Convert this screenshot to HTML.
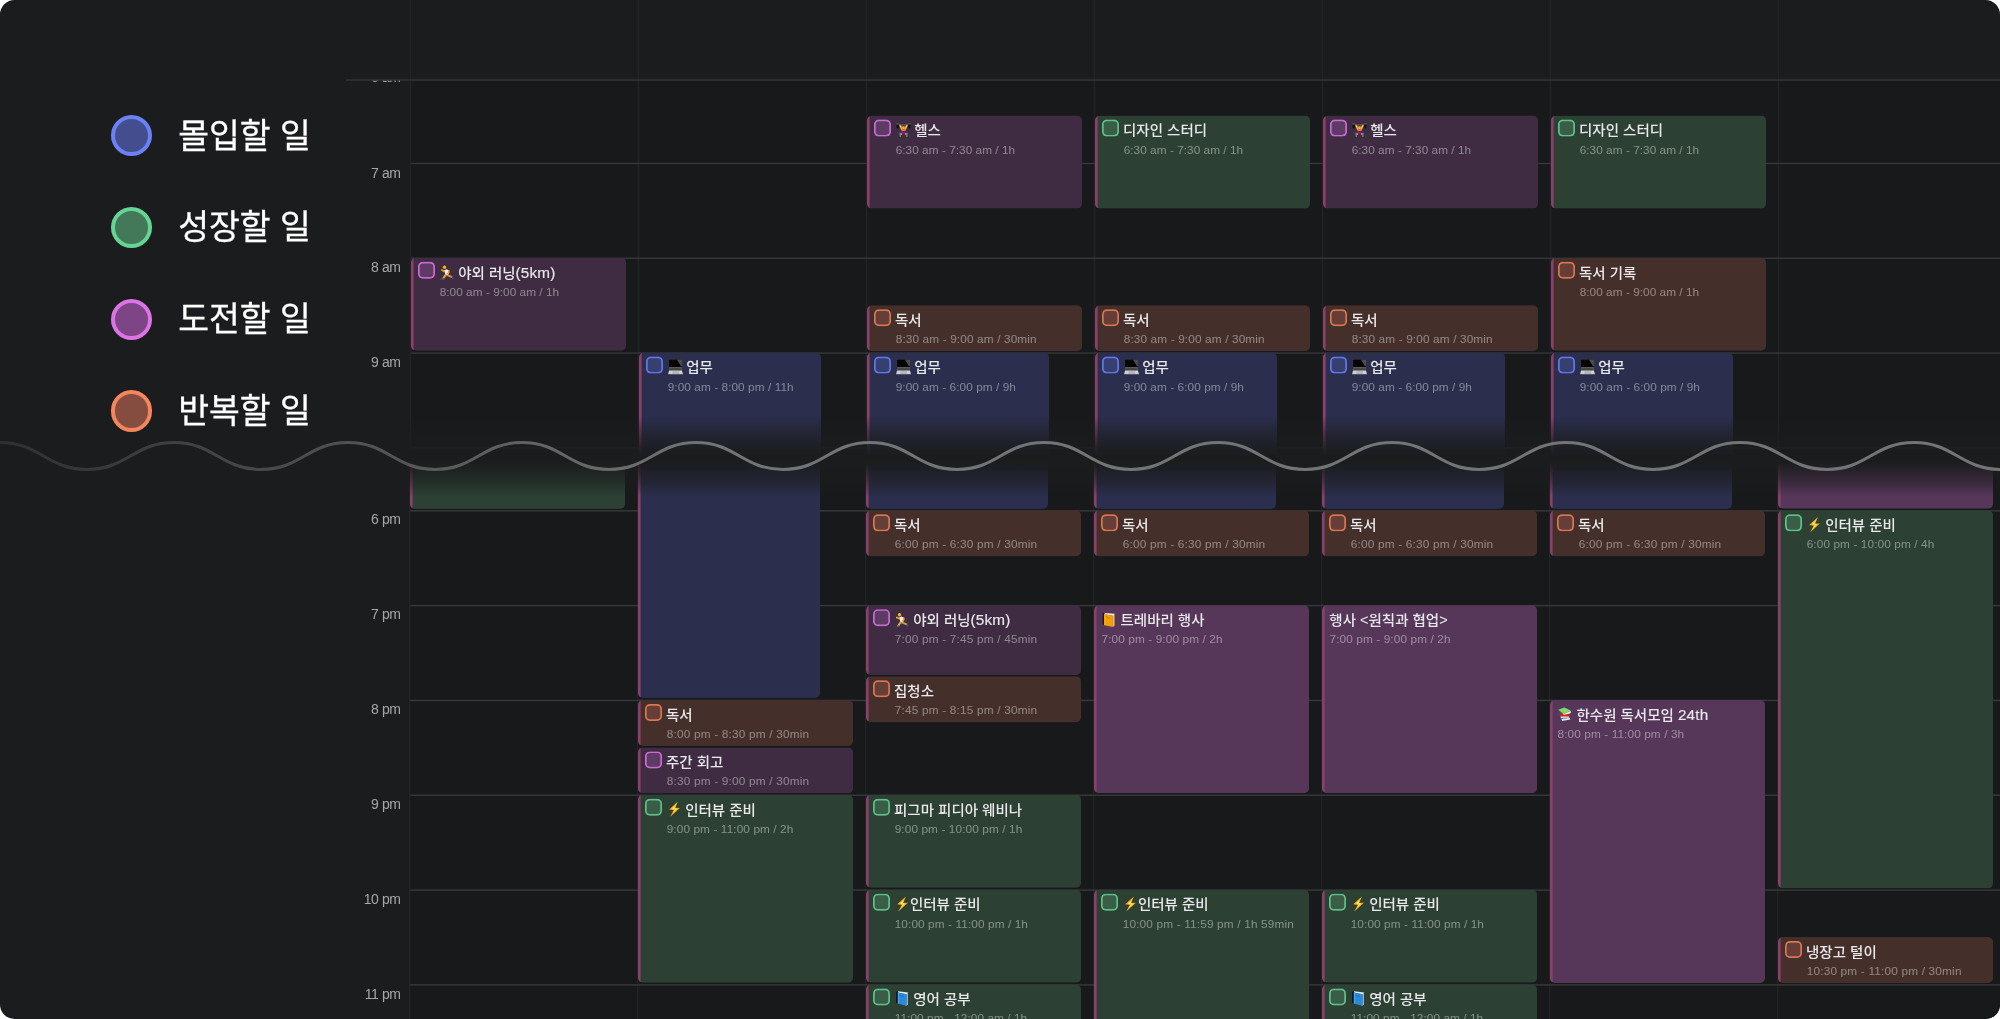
<!DOCTYPE html>
<html lang="ko">
<head>
<meta charset="utf-8">
<title>Calendar</title>
<style>
html,body{margin:0;padding:0;background:#fff}
body{width:2000px;height:1019px;overflow:hidden;font-family:"Liberation Sans","Noto Sans CJK KR",sans-serif}
#frame{will-change:transform;position:relative;width:2000px;height:1019px;background:#1b1c1e;border-radius:14.5px;overflow:hidden}
.sec{position:absolute;left:0;width:2000px;overflow:hidden}
.grid{position:absolute;background:#18191b}
.ln{position:absolute;left:0;top:0}
.tl{position:absolute;left:340.6px;width:60px;text-align:right;font-size:14px;letter-spacing:-.4px;line-height:16px;color:#a6a7a8;white-space:nowrap}
.ev{position:absolute;box-sizing:border-box;background-image:linear-gradient(90deg,#8c3f6b 0,#8c3f6b 2.1px,rgba(140,63,107,0) 3.1px);border-radius:5px;overflow:hidden;white-space:nowrap}
.cb{position:absolute;left:7px;top:4.1px;width:17px;height:17px;box-sizing:border-box;border-radius:5px}
.tt{position:absolute;left:28px;top:5.1px;height:20px;line-height:20px;font-size:14.5px;font-weight:500;color:#e9e9eb;transform-origin:0 50%;transform:scaleY(.95)}
.tt.nc{left:7.3px}
.st{position:absolute;left:28.7px;top:26.5px;height:14px;line-height:14px;font-size:11.8px;color:rgba(255,255,255,.42)}
.st.nc{left:7.5px}
.em{display:inline-block;width:15px;height:16.84px;vertical-align:top;margin-top:.5px;margin-left:.9px}
.la{font-size:15.3px;letter-spacing:.15px;-webkit-text-stroke:.15px #e9e9eb}
.sp{display:inline-block;width:3.3px}
.nc .em{margin-left:.1px}
.nc .sp{width:4.1px}
.fade{position:absolute;left:0;top:400px;width:2000px;height:110px;background:linear-gradient(to bottom,rgba(27,28,30,0) 16px,rgba(27,28,30,.5) 33px,rgba(27,28,30,.86) 48px,rgba(27,28,30,1) 56px,rgba(27,28,30,1) 62px,rgba(27,28,30,.86) 68px,rgba(27,28,30,.5) 82px,rgba(27,28,30,0) 97px)}
.wave{position:absolute;left:0;top:425px}
.dot{position:absolute;left:110.9px;width:41.6px;height:41.6px;box-sizing:border-box;border:4px solid;border-radius:50%}
.lg{position:absolute;left:178.2px;height:60px;line-height:60px;font-size:33.5px;font-weight:400;-webkit-text-stroke:.3px #fff;color:#fff;white-space:nowrap;transform-origin:0 50%;transform:translateY(.6px) scale(1,1.025)}
</style>
</head>
<body>
<div id="frame">
<div class="sec" style="top:0;height:456px">
<div class="grid" style="left:411px;top:80px;width:1589px;height:400px"></div>
<svg class="ln" width="2000" height="480" viewBox="0 0 2000 480"><rect x="409.80" y="0.00" width="1.40" height="480.00" fill="#222325"/><rect x="637.80" y="0.00" width="1.40" height="480.00" fill="#222325"/><rect x="865.80" y="0.00" width="1.40" height="480.00" fill="#222325"/><rect x="1093.80" y="0.00" width="1.40" height="480.00" fill="#222325"/><rect x="1321.80" y="0.00" width="1.40" height="480.00" fill="#222325"/><rect x="1549.80" y="0.00" width="1.40" height="480.00" fill="#222325"/><rect x="1777.80" y="0.00" width="1.40" height="480.00" fill="#222325"/><rect x="2005.80" y="0.00" width="1.40" height="480.00" fill="#222325"/><rect x="346.00" y="79.25" width="1654.00" height="1.60" fill="#313334"/><rect x="411.20" y="162.75" width="1589.00" height="1.40" fill="#363738"/><rect x="411.20" y="257.55" width="1589.00" height="1.40" fill="#363738"/><rect x="411.20" y="352.35" width="1589.00" height="1.40" fill="#363738"/><rect x="411.20" y="447.15" width="1589.00" height="1.40" fill="#363738"/></svg>
<div class="tl" style="top:69.4px;clip-path:inset(11.4px 0 0 0)">6 am</div>
<div class="tl" style="top:164.5px">7 am</div>
<div class="tl" style="top:259.4px">8 am</div>
<div class="tl" style="top:354.1px">9 am</div>
<div class="ev" style="left:411px;top:257px;width:215px;height:93px;background-color:#3f2c42;transform:translateY(0.80px)"><i class="cb" style="background:#5e3b64;box-shadow:inset 0 0 0 1.7px #c96bd3"></i><div class="tt"><svg class="em" viewBox="0 0 15 16" preserveAspectRatio="none"><path d="M5.6 10.6 L3.2 14.3" stroke="#f0a51b" stroke-width="2" stroke-linecap="round"/><path d="M8 11.2 L11.6 12.7" stroke="#e99a17" stroke-width="1.9" stroke-linecap="round"/><path d="M.5 15.3 L3.7 14.7" stroke="#2f4f95" stroke-width="1.5" stroke-linecap="round"/><path d="M12.3 12.4 L12.9 14.7" stroke="#2f4f95" stroke-width="1.5" stroke-linecap="round"/><path d="M5.4 10 L8.7 10.5 L8.2 12.1 L6 11.8Z" fill="#81878e"/><path d="M4 5.9 L6.6 4.9 L8.7 5.9 L8.7 9.2 L7.8 11 L5.4 10.1Z" fill="#eef0f5"/><path d="M4 7 L1.8 5.8" stroke="#f0a51b" stroke-width="1.7" stroke-linecap="round"/><path d="M8.8 6.4 L8.8 8.2 L7.3 9.3" stroke="#f0a51b" stroke-width="1.6" stroke-linecap="round" stroke-linejoin="round" fill="none"/><ellipse cx="4.5" cy="3.1" rx="1.65" ry="1.75" fill="#f6b41c"/></svg><b class="sp"></b>야외 러닝<span class="la">(5km)</span></div><div class="st" style="letter-spacing:0.036px">8:00 am - 9:00 am / 1h</div></div>
<div class="ev" style="left:639px;top:352px;width:182px;height:1041px;background-color:#2b2e4c;transform:translateY(0.60px)"><i class="cb" style="background:#373f70;box-shadow:inset 0 0 0 1.7px #6079ea"></i><div class="tt"><svg class="em" viewBox="0 0 15 16" preserveAspectRatio="none"><path d="M1.1 .1 H14 V7.9 H1.1Z" fill="#050506"/><path d="M8.8 .5 H14 V7.2 H13Z" fill="#4b4c4d"/><path d="M1.1 .1 H14 V.7 H1.1Z" fill="#3b3c40"/><path d="M1.2 7.9 H13.9 V11.3 H1.2Z" fill="#59595a"/><path d="M1.8 9.2 H13.2 V10.9 H1.8Z" fill="#434344"/><path d="M1 11.5 H14 L15.1 15.6 H0Z" fill="#d0d0d2"/><path d="M4.6 12.3 H10.9 L11.2 15.1 H4.3Z" fill="#b4b4b6"/></svg><b class="sp"></b>업무</div><div class="st" style="letter-spacing:0.070px">9:00 am - 8:00 pm / 11h</div></div>
<div class="ev" style="left:867px;top:115px;width:215px;height:93px;background-color:#3f2c42;transform:translateY(0.60px)"><i class="cb" style="background:#5e3b64;box-shadow:inset 0 0 0 1.7px #c96bd3"></i><div class="tt"><svg class="em" viewBox="0 0 15 16" preserveAspectRatio="none"><path d="M2.6 2.9 H12.5" stroke="#8f8f98" stroke-width=".6"/><rect x=".6" y="1.3" width="2.1" height="5.2" rx="1" fill="#0b0b0c"/><rect x="12.4" y="1.3" width="2.1" height="5.2" rx="1" fill="#0b0b0c"/><path d="M.9 1.9 h1.5 M12.7 1.9 h1.5" stroke="#8d9092" stroke-width=".9" stroke-linecap="round"/><path d="M4.2 3.5 L6.1 7.9 M10.8 3.5 L8.9 7.9" stroke="#f2ae1d" stroke-width="1.7" stroke-linecap="round"/><path d="M4.3 4.6 l.9 -.2 M10.7 4.6 l-.9 -.2" stroke="#dcdde2" stroke-width="1.2"/><circle cx="7.5" cy="5.7" r="1.5" fill="#f5b31c"/><path d="M5.8 7.6 H9.3 L9 10 L10 12.4 H8.2 L7.5 11.4 L6.8 12.4 H5 L6.1 10Z" fill="#a9156c"/><path d="M5.9 7.5 H9.2 L9.1 8.6 H6Z" fill="#f0876a"/><path d="M6.6 9 H8.5 V11.8 H6.6Z" fill="#8e0f75"/><circle cx="4.1" cy="11.9" r="1.35" fill="#1a6cc2"/><circle cx="11" cy="11.9" r="1.35" fill="#1a6cc2"/><path d="M5.4 10.9 V12.9 M9.7 10.9 V12.9" stroke="#e8951c" stroke-width="1"/><path d="M4.8 10.9 V12.9 M10.3 10.9 V12.9" stroke="#7cc23c" stroke-width=".5"/><path d="M4.3 13.4 V14.6 M10.8 13.4 V14.6" stroke="#f2ae1d" stroke-width="1.5"/><path d="M3.5 15.4 H5.2 M9.9 15.4 H11.6" stroke="#1b2432" stroke-width="1.3" stroke-linecap="round"/></svg><b class="sp"></b>헬스</div><div class="st" style="letter-spacing:0.036px">6:30 am - 7:30 am / 1h</div></div>
<div class="ev" style="left:867px;top:305px;width:215px;height:46px;background-color:#452f2b;transform:translateY(0.20px)"><i class="cb" style="background:#653f37;box-shadow:inset 0 0 0 1.7px #da7650"></i><div class="tt">독서</div><div class="st" style="letter-spacing:0.136px">8:30 am - 9:00 am / 30min</div></div>
<div class="ev" style="left:867px;top:352px;width:182px;height:852px;background-color:#2b2e4c;transform:translateY(0.60px)"><i class="cb" style="background:#373f70;box-shadow:inset 0 0 0 1.7px #6079ea"></i><div class="tt"><svg class="em" viewBox="0 0 15 16" preserveAspectRatio="none"><path d="M1.1 .1 H14 V7.9 H1.1Z" fill="#050506"/><path d="M8.8 .5 H14 V7.2 H13Z" fill="#4b4c4d"/><path d="M1.1 .1 H14 V.7 H1.1Z" fill="#3b3c40"/><path d="M1.2 7.9 H13.9 V11.3 H1.2Z" fill="#59595a"/><path d="M1.8 9.2 H13.2 V10.9 H1.8Z" fill="#434344"/><path d="M1 11.5 H14 L15.1 15.6 H0Z" fill="#d0d0d2"/><path d="M4.6 12.3 H10.9 L11.2 15.1 H4.3Z" fill="#b4b4b6"/></svg><b class="sp"></b>업무</div><div class="st" style="letter-spacing:0.073px">9:00 am - 6:00 pm / 9h</div></div>
<div class="ev" style="left:1095px;top:115px;width:215px;height:93px;background-color:#2c4034;transform:translateY(0.60px)"><i class="cb" style="background:#395d47;box-shadow:inset 0 0 0 1.7px #5ec08a"></i><div class="tt">디자인 스터디</div><div class="st" style="letter-spacing:0.036px">6:30 am - 7:30 am / 1h</div></div>
<div class="ev" style="left:1095px;top:305px;width:215px;height:46px;background-color:#452f2b;transform:translateY(0.20px)"><i class="cb" style="background:#653f37;box-shadow:inset 0 0 0 1.7px #da7650"></i><div class="tt">독서</div><div class="st" style="letter-spacing:0.136px">8:30 am - 9:00 am / 30min</div></div>
<div class="ev" style="left:1095px;top:352px;width:182px;height:852px;background-color:#2b2e4c;transform:translateY(0.60px)"><i class="cb" style="background:#373f70;box-shadow:inset 0 0 0 1.7px #6079ea"></i><div class="tt"><svg class="em" viewBox="0 0 15 16" preserveAspectRatio="none"><path d="M1.1 .1 H14 V7.9 H1.1Z" fill="#050506"/><path d="M8.8 .5 H14 V7.2 H13Z" fill="#4b4c4d"/><path d="M1.1 .1 H14 V.7 H1.1Z" fill="#3b3c40"/><path d="M1.2 7.9 H13.9 V11.3 H1.2Z" fill="#59595a"/><path d="M1.8 9.2 H13.2 V10.9 H1.8Z" fill="#434344"/><path d="M1 11.5 H14 L15.1 15.6 H0Z" fill="#d0d0d2"/><path d="M4.6 12.3 H10.9 L11.2 15.1 H4.3Z" fill="#b4b4b6"/></svg><b class="sp"></b>업무</div><div class="st" style="letter-spacing:0.073px">9:00 am - 6:00 pm / 9h</div></div>
<div class="ev" style="left:1323px;top:115px;width:215px;height:93px;background-color:#3f2c42;transform:translateY(0.60px)"><i class="cb" style="background:#5e3b64;box-shadow:inset 0 0 0 1.7px #c96bd3"></i><div class="tt"><svg class="em" viewBox="0 0 15 16" preserveAspectRatio="none"><path d="M2.6 2.9 H12.5" stroke="#8f8f98" stroke-width=".6"/><rect x=".6" y="1.3" width="2.1" height="5.2" rx="1" fill="#0b0b0c"/><rect x="12.4" y="1.3" width="2.1" height="5.2" rx="1" fill="#0b0b0c"/><path d="M.9 1.9 h1.5 M12.7 1.9 h1.5" stroke="#8d9092" stroke-width=".9" stroke-linecap="round"/><path d="M4.2 3.5 L6.1 7.9 M10.8 3.5 L8.9 7.9" stroke="#f2ae1d" stroke-width="1.7" stroke-linecap="round"/><path d="M4.3 4.6 l.9 -.2 M10.7 4.6 l-.9 -.2" stroke="#dcdde2" stroke-width="1.2"/><circle cx="7.5" cy="5.7" r="1.5" fill="#f5b31c"/><path d="M5.8 7.6 H9.3 L9 10 L10 12.4 H8.2 L7.5 11.4 L6.8 12.4 H5 L6.1 10Z" fill="#a9156c"/><path d="M5.9 7.5 H9.2 L9.1 8.6 H6Z" fill="#f0876a"/><path d="M6.6 9 H8.5 V11.8 H6.6Z" fill="#8e0f75"/><circle cx="4.1" cy="11.9" r="1.35" fill="#1a6cc2"/><circle cx="11" cy="11.9" r="1.35" fill="#1a6cc2"/><path d="M5.4 10.9 V12.9 M9.7 10.9 V12.9" stroke="#e8951c" stroke-width="1"/><path d="M4.8 10.9 V12.9 M10.3 10.9 V12.9" stroke="#7cc23c" stroke-width=".5"/><path d="M4.3 13.4 V14.6 M10.8 13.4 V14.6" stroke="#f2ae1d" stroke-width="1.5"/><path d="M3.5 15.4 H5.2 M9.9 15.4 H11.6" stroke="#1b2432" stroke-width="1.3" stroke-linecap="round"/></svg><b class="sp"></b>헬스</div><div class="st" style="letter-spacing:0.036px">6:30 am - 7:30 am / 1h</div></div>
<div class="ev" style="left:1323px;top:305px;width:215px;height:46px;background-color:#452f2b;transform:translateY(0.20px)"><i class="cb" style="background:#653f37;box-shadow:inset 0 0 0 1.7px #da7650"></i><div class="tt">독서</div><div class="st" style="letter-spacing:0.136px">8:30 am - 9:00 am / 30min</div></div>
<div class="ev" style="left:1323px;top:352px;width:182px;height:852px;background-color:#2b2e4c;transform:translateY(0.60px)"><i class="cb" style="background:#373f70;box-shadow:inset 0 0 0 1.7px #6079ea"></i><div class="tt"><svg class="em" viewBox="0 0 15 16" preserveAspectRatio="none"><path d="M1.1 .1 H14 V7.9 H1.1Z" fill="#050506"/><path d="M8.8 .5 H14 V7.2 H13Z" fill="#4b4c4d"/><path d="M1.1 .1 H14 V.7 H1.1Z" fill="#3b3c40"/><path d="M1.2 7.9 H13.9 V11.3 H1.2Z" fill="#59595a"/><path d="M1.8 9.2 H13.2 V10.9 H1.8Z" fill="#434344"/><path d="M1 11.5 H14 L15.1 15.6 H0Z" fill="#d0d0d2"/><path d="M4.6 12.3 H10.9 L11.2 15.1 H4.3Z" fill="#b4b4b6"/></svg><b class="sp"></b>업무</div><div class="st" style="letter-spacing:0.073px">9:00 am - 6:00 pm / 9h</div></div>
<div class="ev" style="left:1551px;top:115px;width:215px;height:93px;background-color:#2c4034;transform:translateY(0.60px)"><i class="cb" style="background:#395d47;box-shadow:inset 0 0 0 1.7px #5ec08a"></i><div class="tt">디자인 스터디</div><div class="st" style="letter-spacing:0.036px">6:30 am - 7:30 am / 1h</div></div>
<div class="ev" style="left:1551px;top:257px;width:215px;height:93px;background-color:#452f2b;transform:translateY(0.80px)"><i class="cb" style="background:#653f37;box-shadow:inset 0 0 0 1.7px #da7650"></i><div class="tt">독서 기록</div><div class="st" style="letter-spacing:0.036px">8:00 am - 9:00 am / 1h</div></div>
<div class="ev" style="left:1551px;top:352px;width:182px;height:852px;background-color:#2b2e4c;transform:translateY(0.60px)"><i class="cb" style="background:#373f70;box-shadow:inset 0 0 0 1.7px #6079ea"></i><div class="tt"><svg class="em" viewBox="0 0 15 16" preserveAspectRatio="none"><path d="M1.1 .1 H14 V7.9 H1.1Z" fill="#050506"/><path d="M8.8 .5 H14 V7.2 H13Z" fill="#4b4c4d"/><path d="M1.1 .1 H14 V.7 H1.1Z" fill="#3b3c40"/><path d="M1.2 7.9 H13.9 V11.3 H1.2Z" fill="#59595a"/><path d="M1.8 9.2 H13.2 V10.9 H1.8Z" fill="#434344"/><path d="M1 11.5 H14 L15.1 15.6 H0Z" fill="#d0d0d2"/><path d="M4.6 12.3 H10.9 L11.2 15.1 H4.3Z" fill="#b4b4b6"/></svg><b class="sp"></b>업무</div><div class="st" style="letter-spacing:0.073px">9:00 am - 6:00 pm / 9h</div></div>
</div>
<div class="sec" style="top:456px;height:563px"><div style="position:absolute;left:0;top:-456px;width:2000px;height:1019px">
<div class="grid" style="left:410px;top:440px;width:1590px;height:579px"></div>
<svg class="ln" width="2000" height="1019" viewBox="0 0 2000 1019"><rect x="408.90" y="440.00" width="1.40" height="579.00" fill="#222325"/><rect x="636.90" y="440.00" width="1.40" height="579.00" fill="#222325"/><rect x="864.90" y="440.00" width="1.40" height="579.00" fill="#222325"/><rect x="1092.90" y="440.00" width="1.40" height="579.00" fill="#222325"/><rect x="1320.90" y="440.00" width="1.40" height="579.00" fill="#222325"/><rect x="1548.90" y="440.00" width="1.40" height="579.00" fill="#222325"/><rect x="1776.90" y="440.00" width="1.40" height="579.00" fill="#222325"/><rect x="2004.90" y="440.00" width="1.40" height="579.00" fill="#222325"/><rect x="410.30" y="415.23" width="1590.00" height="1.50" fill="#363738"/><rect x="410.30" y="510.05" width="1590.00" height="1.50" fill="#363738"/><rect x="410.30" y="604.87" width="1590.00" height="1.50" fill="#363738"/><rect x="410.30" y="699.69" width="1590.00" height="1.50" fill="#363738"/><rect x="410.30" y="794.51" width="1590.00" height="1.50" fill="#363738"/><rect x="410.30" y="889.33" width="1590.00" height="1.50" fill="#363738"/><rect x="410.30" y="984.15" width="1590.00" height="1.50" fill="#363738"/></svg>
<div class="tl" style="top:511.4px">6 pm</div>
<div class="tl" style="top:606.2px">7 pm</div>
<div class="tl" style="top:701.0px">8 pm</div>
<div class="tl" style="top:795.9px">9 pm</div>
<div class="tl" style="top:890.7px">10 pm</div>
<div class="tl" style="top:985.5px">11 pm</div>
<div class="ev" style="left:410px;top:225px;width:215px;height:283px;background-color:#2c4034;transform:translateY(0.89px)"><i class="cb" style="background:#395d47;box-shadow:inset 0 0 0 1.7px #5ec08a"></i></div>
<div class="ev" style="left:638px;top:-344px;width:182px;height:1041px;background-color:#2b2e4c;transform:translateY(0.97px)"><i class="cb" style="background:#373f70;box-shadow:inset 0 0 0 1.7px #6079ea"></i></div>
<div class="ev" style="left:638px;top:699px;width:215px;height:46px;background-color:#452f2b;transform:translateY(0.99px)"><i class="cb" style="background:#653f37;box-shadow:inset 0 0 0 1.7px #da7650"></i><div class="tt">독서</div><div class="st" style="letter-spacing:0.200px">8:00 pm - 8:30 pm / 30min</div></div>
<div class="ev" style="left:638px;top:747px;width:215px;height:46px;background-color:#3f2c42;transform:translateY(0.40px)"><i class="cb" style="background:#5e3b64;box-shadow:inset 0 0 0 1.7px #c96bd3"></i><div class="tt">주간 회고</div><div class="st" style="letter-spacing:0.200px">8:30 pm - 9:00 pm / 30min</div></div>
<div class="ev" style="left:638px;top:794px;width:215px;height:188px;background-color:#2c4034;transform:translateY(0.81px)"><i class="cb" style="background:#395d47;box-shadow:inset 0 0 0 1.7px #5ec08a"></i><div class="tt"><svg class="em" viewBox="0 0 15 16" preserveAspectRatio="none"><path d="M10.9 .3 L2.2 8.3 L6.7 8.9 L3 15.7 L12.9 6.8 L8.3 6.6Z" fill="#f5a816"/><path d="M9.6 2.4 L4.4 7.6 L7.9 7.9 L5 12.9 L10.6 7.6 L7.3 7.3Z" fill="#ffd93b"/><path d="M7.4 5.6 L5.6 7.3 L8.6 7.8 L7.2 9.6 L9.6 7.6 L7 7.2Z" fill="#fffbe0"/></svg><b class="sp"></b>인터뷰 준비</div><div class="st" style="letter-spacing:0.104px">9:00 pm - 11:00 pm / 2h</div></div>
<div class="ev" style="left:866px;top:-344px;width:182px;height:852px;background-color:#2b2e4c;transform:translateY(0.97px)"><i class="cb" style="background:#373f70;box-shadow:inset 0 0 0 1.7px #6079ea"></i></div>
<div class="ev" style="left:866px;top:510px;width:215px;height:46px;background-color:#452f2b;transform:translateY(0.35px)"><i class="cb" style="background:#653f37;box-shadow:inset 0 0 0 1.7px #da7650"></i><div class="tt">독서</div><div class="st" style="letter-spacing:0.200px">6:00 pm - 6:30 pm / 30min</div></div>
<div class="ev" style="left:866px;top:605px;width:215px;height:70px;background-color:#3f2c42;transform:translateY(0.17px)"><i class="cb" style="background:#5e3b64;box-shadow:inset 0 0 0 1.7px #c96bd3"></i><div class="tt"><svg class="em" viewBox="0 0 15 16" preserveAspectRatio="none"><path d="M5.6 10.6 L3.2 14.3" stroke="#f0a51b" stroke-width="2" stroke-linecap="round"/><path d="M8 11.2 L11.6 12.7" stroke="#e99a17" stroke-width="1.9" stroke-linecap="round"/><path d="M.5 15.3 L3.7 14.7" stroke="#2f4f95" stroke-width="1.5" stroke-linecap="round"/><path d="M12.3 12.4 L12.9 14.7" stroke="#2f4f95" stroke-width="1.5" stroke-linecap="round"/><path d="M5.4 10 L8.7 10.5 L8.2 12.1 L6 11.8Z" fill="#81878e"/><path d="M4 5.9 L6.6 4.9 L8.7 5.9 L8.7 9.2 L7.8 11 L5.4 10.1Z" fill="#eef0f5"/><path d="M4 7 L1.8 5.8" stroke="#f0a51b" stroke-width="1.7" stroke-linecap="round"/><path d="M8.8 6.4 L8.8 8.2 L7.3 9.3" stroke="#f0a51b" stroke-width="1.6" stroke-linecap="round" stroke-linejoin="round" fill="none"/><ellipse cx="4.5" cy="3.1" rx="1.65" ry="1.75" fill="#f6b41c"/></svg><b class="sp"></b>야외 러닝<span class="la">(5km)</span></div><div class="st" style="letter-spacing:0.200px">7:00 pm - 7:45 pm / 45min</div></div>
<div class="ev" style="left:866px;top:676px;width:215px;height:46px;background-color:#452f2b;transform:translateY(0.28px)"><i class="cb" style="background:#653f37;box-shadow:inset 0 0 0 1.7px #da7650"></i><div class="tt">집청소</div><div class="st" style="letter-spacing:0.200px">7:45 pm - 8:15 pm / 30min</div></div>
<div class="ev" style="left:866px;top:794px;width:215px;height:93px;background-color:#2c4034;transform:translateY(0.81px)"><i class="cb" style="background:#395d47;box-shadow:inset 0 0 0 1.7px #5ec08a"></i><div class="tt">피그마 피디아 웨비나</div><div class="st" style="letter-spacing:0.104px">9:00 pm - 10:00 pm / 1h</div></div>
<div class="ev" style="left:866px;top:889px;width:215px;height:93px;background-color:#2c4034;transform:translateY(0.63px)"><i class="cb" style="background:#395d47;box-shadow:inset 0 0 0 1.7px #5ec08a"></i><div class="tt"><svg class="em" viewBox="0 0 15 16" preserveAspectRatio="none"><path d="M10.9 .3 L2.2 8.3 L6.7 8.9 L3 15.7 L12.9 6.8 L8.3 6.6Z" fill="#f5a816"/><path d="M9.6 2.4 L4.4 7.6 L7.9 7.9 L5 12.9 L10.6 7.6 L7.3 7.3Z" fill="#ffd93b"/><path d="M7.4 5.6 L5.6 7.3 L8.6 7.8 L7.2 9.6 L9.6 7.6 L7 7.2Z" fill="#fffbe0"/></svg>인터뷰 준비</div><div class="st" style="letter-spacing:0.100px">10:00 pm - 11:00 pm / 1h</div></div>
<div class="ev" style="left:866px;top:984px;width:215px;height:93px;background-color:#2c4034;transform:translateY(0.45px)"><i class="cb" style="background:#395d47;box-shadow:inset 0 0 0 1.7px #5ec08a"></i><div class="tt"><svg class="em" viewBox="0 0 15 16" preserveAspectRatio="none"><path d="M1 .6 L2.9 .4 V12.4 L1 12Z" fill="#10162e"/><path d="M12.2 1.4 L13 1.5 V13.4 L12.2 14.2Z" fill="#1871c4"/><path d="M3.2 .4 L13 1.5 L12.2 3.6 L2.9 1.6Z" fill="#e6ecf3"/><path d="M11.4 3.3 L12.8 2.6 V13.8 L11.4 15Z" fill="#b9c5d4"/><path d="M2.9 1.5 L11.5 3.4 V15.1 L2.9 12.5Z" fill="#2a8bd8"/><path d="M2.9 1.5 L4 1.8 V12.8 L2.9 12.5Z" fill="#46a8ef"/><path d="M4.6 4.2 Q6 4.4 6.8 5.6 Q7.6 5.2 8.6 5.6" stroke="#1c68ab" stroke-width=".9" fill="none"/></svg><b class="sp"></b>영어 공부</div><div class="st" style="letter-spacing:0.067px">11:00 pm - 12:00 am / 1h</div></div>
<div class="ev" style="left:1094px;top:-344px;width:182px;height:852px;background-color:#2b2e4c;transform:translateY(0.97px)"><i class="cb" style="background:#373f70;box-shadow:inset 0 0 0 1.7px #6079ea"></i></div>
<div class="ev" style="left:1094px;top:510px;width:215px;height:46px;background-color:#452f2b;transform:translateY(0.35px)"><i class="cb" style="background:#653f37;box-shadow:inset 0 0 0 1.7px #da7650"></i><div class="tt">독서</div><div class="st" style="letter-spacing:0.200px">6:00 pm - 6:30 pm / 30min</div></div>
<div class="ev" style="left:1094px;top:605px;width:215px;height:188px;background-color:#56375a;transform:translateY(0.17px)"><div class="tt nc"><svg class="em" viewBox="0 0 15 16" preserveAspectRatio="none"><path d="M1.6 1.7 L3.4 1.5 V13.3 L1.6 12.9Z" fill="#1f1a14"/><path d="M12.8 2.1 L13.6 2.2 V14.2 L12.8 15Z" fill="#e8890c"/><path d="M3.9 1.5 L13.5 2.2 L12.6 4.5 L3.4 2.6Z" fill="#f4ead8"/><path d="M11.8 4.3 L13.2 3.4 V14.6 L11.8 15.6Z" fill="#cbbfa6"/><path d="M3.3 2.4 L11.9 4.3 V15.8 L3.3 13.5Z" fill="#f59c07"/><path d="M3.3 2.4 L4.4 2.7 V13.8 L3.3 13.5Z" fill="#fdb910"/><path d="M5.2 5 Q6.6 5.2 7.4 6.8 Q8 6 8.8 6.2" stroke="#cf7a06" stroke-width=".9" fill="none"/></svg><b class="sp"></b>트레바리 행사</div><div class="st nc" style="letter-spacing:0.109px">7:00 pm - 9:00 pm / 2h</div></div>
<div class="ev" style="left:1094px;top:889px;width:215px;height:186px;background-color:#2c4034;transform:translateY(0.63px)"><i class="cb" style="background:#395d47;box-shadow:inset 0 0 0 1.7px #5ec08a"></i><div class="tt"><svg class="em" viewBox="0 0 15 16" preserveAspectRatio="none"><path d="M10.9 .3 L2.2 8.3 L6.7 8.9 L3 15.7 L12.9 6.8 L8.3 6.6Z" fill="#f5a816"/><path d="M9.6 2.4 L4.4 7.6 L7.9 7.9 L5 12.9 L10.6 7.6 L7.3 7.3Z" fill="#ffd93b"/><path d="M7.4 5.6 L5.6 7.3 L8.6 7.8 L7.2 9.6 L9.6 7.6 L7 7.2Z" fill="#fffbe0"/></svg>인터뷰 준비</div><div class="st" style="letter-spacing:0.167px">10:00 pm - 11:59 pm / 1h 59min</div></div>
<div class="ev" style="left:1322px;top:-344px;width:182px;height:852px;background-color:#2b2e4c;transform:translateY(0.97px)"><i class="cb" style="background:#373f70;box-shadow:inset 0 0 0 1.7px #6079ea"></i></div>
<div class="ev" style="left:1322px;top:510px;width:215px;height:46px;background-color:#452f2b;transform:translateY(0.35px)"><i class="cb" style="background:#653f37;box-shadow:inset 0 0 0 1.7px #da7650"></i><div class="tt">독서</div><div class="st" style="letter-spacing:0.200px">6:00 pm - 6:30 pm / 30min</div></div>
<div class="ev" style="left:1322px;top:605px;width:215px;height:188px;background-color:#56375a;transform:translateY(0.17px)"><div class="tt nc">행사 &lt;원칙과 협업&gt;</div><div class="st nc" style="letter-spacing:0.109px">7:00 pm - 9:00 pm / 2h</div></div>
<div class="ev" style="left:1322px;top:889px;width:215px;height:93px;background-color:#2c4034;transform:translateY(0.63px)"><i class="cb" style="background:#395d47;box-shadow:inset 0 0 0 1.7px #5ec08a"></i><div class="tt"><svg class="em" viewBox="0 0 15 16" preserveAspectRatio="none"><path d="M10.9 .3 L2.2 8.3 L6.7 8.9 L3 15.7 L12.9 6.8 L8.3 6.6Z" fill="#f5a816"/><path d="M9.6 2.4 L4.4 7.6 L7.9 7.9 L5 12.9 L10.6 7.6 L7.3 7.3Z" fill="#ffd93b"/><path d="M7.4 5.6 L5.6 7.3 L8.6 7.8 L7.2 9.6 L9.6 7.6 L7 7.2Z" fill="#fffbe0"/></svg><b class="sp"></b>인터뷰 준비</div><div class="st" style="letter-spacing:0.100px">10:00 pm - 11:00 pm / 1h</div></div>
<div class="ev" style="left:1322px;top:984px;width:215px;height:93px;background-color:#2c4034;transform:translateY(0.45px)"><i class="cb" style="background:#395d47;box-shadow:inset 0 0 0 1.7px #5ec08a"></i><div class="tt"><svg class="em" viewBox="0 0 15 16" preserveAspectRatio="none"><path d="M1 .6 L2.9 .4 V12.4 L1 12Z" fill="#10162e"/><path d="M12.2 1.4 L13 1.5 V13.4 L12.2 14.2Z" fill="#1871c4"/><path d="M3.2 .4 L13 1.5 L12.2 3.6 L2.9 1.6Z" fill="#e6ecf3"/><path d="M11.4 3.3 L12.8 2.6 V13.8 L11.4 15Z" fill="#b9c5d4"/><path d="M2.9 1.5 L11.5 3.4 V15.1 L2.9 12.5Z" fill="#2a8bd8"/><path d="M2.9 1.5 L4 1.8 V12.8 L2.9 12.5Z" fill="#46a8ef"/><path d="M4.6 4.2 Q6 4.4 6.8 5.6 Q7.6 5.2 8.6 5.6" stroke="#1c68ab" stroke-width=".9" fill="none"/></svg><b class="sp"></b>영어 공부</div><div class="st" style="letter-spacing:0.067px">11:00 pm - 12:00 am / 1h</div></div>
<div class="ev" style="left:1550px;top:-344px;width:182px;height:852px;background-color:#2b2e4c;transform:translateY(0.97px)"><i class="cb" style="background:#373f70;box-shadow:inset 0 0 0 1.7px #6079ea"></i></div>
<div class="ev" style="left:1550px;top:510px;width:215px;height:46px;background-color:#452f2b;transform:translateY(0.35px)"><i class="cb" style="background:#653f37;box-shadow:inset 0 0 0 1.7px #da7650"></i><div class="tt">독서</div><div class="st" style="letter-spacing:0.200px">6:00 pm - 6:30 pm / 30min</div></div>
<div class="ev" style="left:1550px;top:699px;width:215px;height:283px;background-color:#56375a;transform:translateY(0.99px)"><div class="tt nc"><svg class="em" viewBox="0 0 15 16" preserveAspectRatio="none"><path d="M1.2 6 L2.2 5.8 L2.6 9.6 L1.5 8.9Z" fill="#2b4da3"/><path d="M3.8 11.8 L12.6 11.1 L13.4 13 L5.2 14.6Z" fill="#dfe6ee"/><path d="M3.4 11.4 L12.4 10.9 L12.6 11.5 L3.9 12.2Z" fill="#3a3f93"/><path d="M3.6 12 L5.2 14.6 L4.6 14.7 L3.2 12.2Z" fill="#2a3f92"/><path d="M3.5 9.8 L12 9.7 L12 11.3 L3.7 11.6Z" fill="#f0dcd3"/><path d="M2.8 6.4 L12.5 8 V9.9 L3.1 9.9Z" fill="#e31a0c"/><path d="M1.2 3.2 L7.3 1 L13.7 4.1 L6.4 7.7Z" fill="#86d672"/><path d="M1.2 3.2 L6.4 7.7 L6.5 8.6 L1.5 4.4Z" fill="#1c7a1a"/><path d="M6.4 7.7 L13.7 4.2 V6.7 L6.7 8.5Z" fill="#edf2ee"/></svg><b class="sp"></b>한수원 독서모임 <span class="la">24th</span></div><div class="st nc" style="letter-spacing:0.104px">8:00 pm - 11:00 pm / 3h</div></div>
<div class="ev" style="left:1778px;top:320px;width:215px;height:188px;background-color:#56375a;transform:translateY(0.71px)"></div>
<div class="ev" style="left:1778px;top:510px;width:215px;height:378px;background-color:#2c4034;transform:translateY(0.35px)"><i class="cb" style="background:#395d47;box-shadow:inset 0 0 0 1.7px #5ec08a"></i><div class="tt"><svg class="em" viewBox="0 0 15 16" preserveAspectRatio="none"><path d="M10.9 .3 L2.2 8.3 L6.7 8.9 L3 15.7 L12.9 6.8 L8.3 6.6Z" fill="#f5a816"/><path d="M9.6 2.4 L4.4 7.6 L7.9 7.9 L5 12.9 L10.6 7.6 L7.3 7.3Z" fill="#ffd93b"/><path d="M7.4 5.6 L5.6 7.3 L8.6 7.8 L7.2 9.6 L9.6 7.6 L7 7.2Z" fill="#fffbe0"/></svg><b class="sp"></b>인터뷰 준비</div><div class="st" style="letter-spacing:0.104px">6:00 pm - 10:00 pm / 4h</div></div>
<div class="ev" style="left:1778px;top:937px;width:215px;height:46px;background-color:#452f2b;transform:translateY(0.04px)"><i class="cb" style="background:#653f37;box-shadow:inset 0 0 0 1.7px #da7650"></i><div class="tt">냉장고 털이</div><div class="st" style="letter-spacing:0.185px">10:30 pm - 11:00 pm / 30min</div></div>
</div></div>
<div class="fade"></div>
<svg class="wave" width="2000" height="60" viewBox="0 425 2000 60"><defs><linearGradient id="wg" x1="0" y1="0" x2="2000" y2="0" gradientUnits="userSpaceOnUse"><stop offset="0" stop-color="#737476" stop-opacity=".22"/><stop offset=".36" stop-color="#737476" stop-opacity="1"/><stop offset="1" stop-color="#737476" stop-opacity="1"/></linearGradient></defs><path fill="none" stroke="url(#wg)" stroke-width="3" d="M-87.0,469.5 C-46.98,469.5 -40.02,442.5 0.00,442.5 C40.02,442.5 46.98,469.5 87.00,469.5 C127.02,469.5 133.98,442.5 174.00,442.5 C214.02,442.5 220.98,469.5 261.00,469.5 C301.02,469.5 307.98,442.5 348.00,442.5 C388.02,442.5 394.98,469.5 435.00,469.5 C475.02,469.5 481.98,442.5 522.00,442.5 C562.02,442.5 568.98,469.5 609.00,469.5 C649.02,469.5 655.98,442.5 696.00,442.5 C736.02,442.5 742.98,469.5 783.00,469.5 C823.02,469.5 829.98,442.5 870.00,442.5 C910.02,442.5 916.98,469.5 957.00,469.5 C997.02,469.5 1003.98,442.5 1044.00,442.5 C1084.02,442.5 1090.98,469.5 1131.00,469.5 C1171.02,469.5 1177.98,442.5 1218.00,442.5 C1258.02,442.5 1264.98,469.5 1305.00,469.5 C1345.02,469.5 1351.98,442.5 1392.00,442.5 C1432.02,442.5 1438.98,469.5 1479.00,469.5 C1519.02,469.5 1525.98,442.5 1566.00,442.5 C1606.02,442.5 1612.98,469.5 1653.00,469.5 C1693.02,469.5 1699.98,442.5 1740.00,442.5 C1780.02,442.5 1786.98,469.5 1827.00,469.5 C1867.02,469.5 1873.98,442.5 1914.00,442.5 C1954.02,442.5 1960.98,469.5 2001.00,469.5 C2041.02,469.5 2047.98,442.5 2088.00,442.5"/></svg>
<div class="dot" style="top:114.8px;background:#444e8e;border-color:#6b82f6"></div>
<div class="lg" style="top:105.5px">몰입할 일</div>
<div class="dot" style="top:206.60000000000002px;background:#437858;border-color:#65d596"></div>
<div class="lg" style="top:197.3px">성장할 일</div>
<div class="dot" style="top:298.5px;background:#7d4585;border-color:#dd74e6"></div>
<div class="lg" style="top:289.2px">도전할 일</div>
<div class="dot" style="top:390.3px;background:#854d40;border-color:#f4855c"></div>
<div class="lg" style="top:381px">반복할 일</div>
</div>
</body>
</html>
